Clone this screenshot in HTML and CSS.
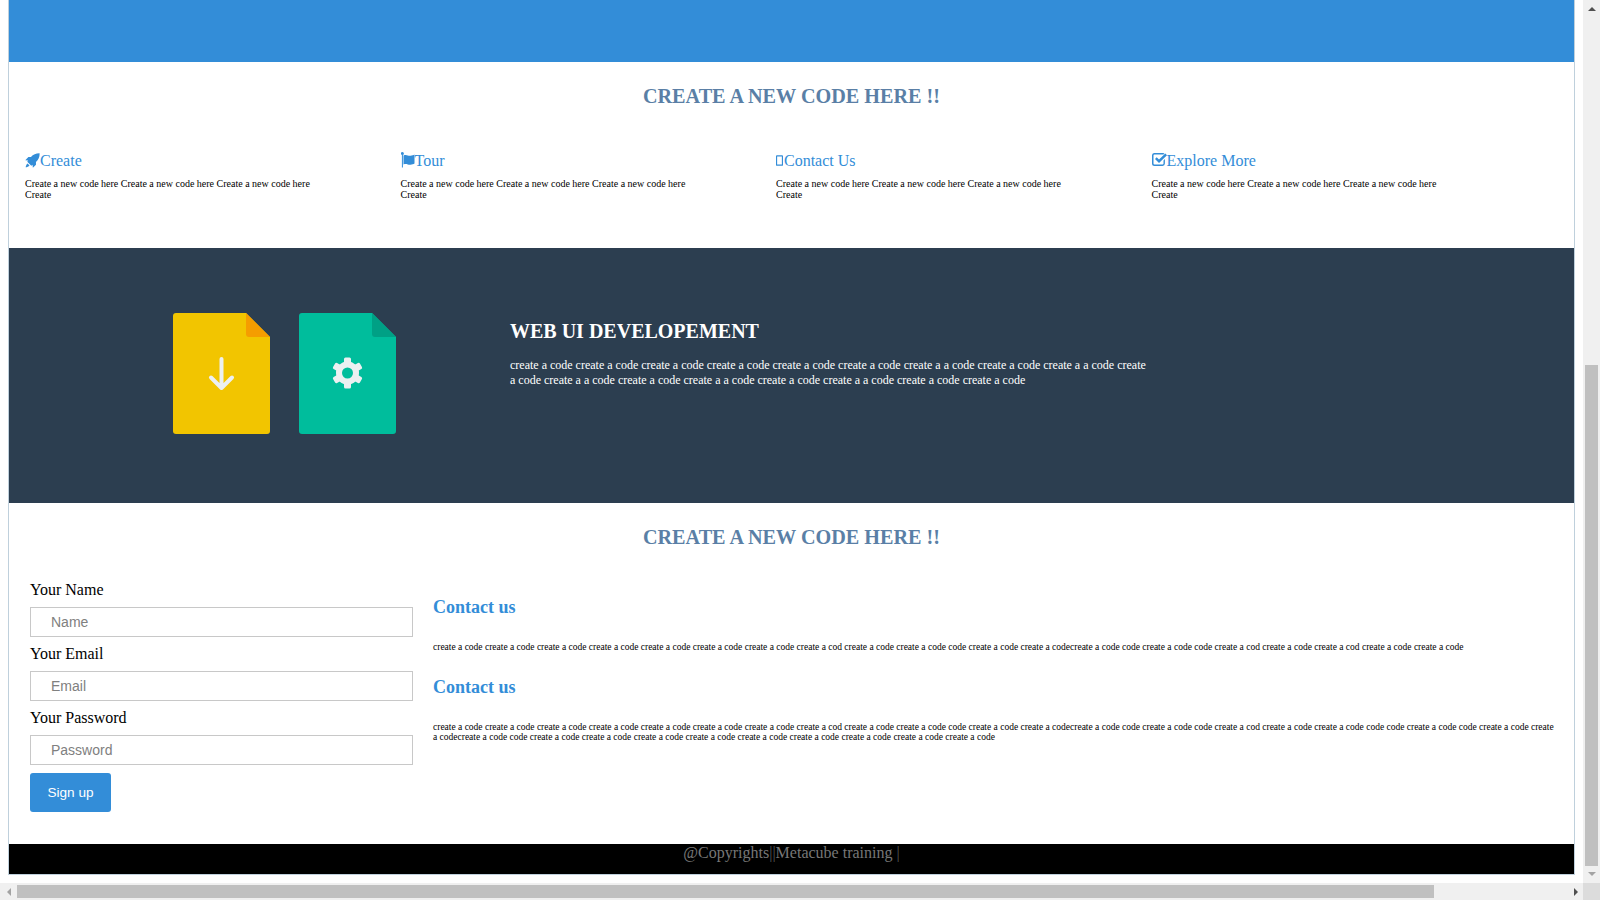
FILE: index.html
```html
<!DOCTYPE html>
<html lang="en">
<head>
<meta charset="utf-8">
<title>Create a new code</title>
<link rel="stylesheet" href="styles.css">
</head>
<body>
<div class="window">
  <div class="viewport">
    <div class="page">
      <div class="topbar"></div>
      <h2 class="section-title">CREATE A NEW CODE HERE !!</h2>
      <div class="features">
        <div class="feature">
          <h3 class="feature-title"><svg class="ficon" viewBox="0 0 16 16"><path d="M15.6.4C12 .3 8.700 1.700 6.400 4.300H3.600L.300 7.600l3.100.4-1 1.300 4.300 4.300 1.300-1 .4 3.100 3.300-3.300V9.600C14.300 7.300 15.700 4 15.600.4zM2.700 11.200C1.400 12 1 14 .7 15.300c1.300-.3 3.300-.7 4.100-2z"/></svg>Create</h3>
          <p class="feature-text">Create a new code here Create a new code here Create a new code here Create</p>
        </div>
        <div class="feature">
          <h3 class="feature-title"><svg class="ficon flag" viewBox="0 0 14 16"><path d="M.9 2.600h1v13h-1zM1.400 0a1.500 1.500 0 1 1 0 3 1.500 1.500 0 0 1 0-3zM2.500 3.500c3-1.400 4.500.6 7 .3 1.500-.2 3-.8 4-1.300v9c-1 .6-2.500 1.100-4 1.300-2.500.3-4-1.600-7-.3z"/></svg>Tour</h3>
          <p class="feature-text">Create a new code here Create a new code here Create a new code here Create</p>
        </div>
        <div class="feature">
          <h3 class="feature-title"><svg class="ficon phone" viewBox="0 0 8 13"><path fill-rule="evenodd" d="M1 .5h6a1 1 0 0 1 1 1v10a1 1 0 0 1-1 1H1a1 1 0 0 1-1-1v-10a1 1 0 0 1 1-1zM1.300 2v9h5.400V2z"/></svg>Contact Us</h3>
          <p class="feature-text">Create a new code here Create a new code here Create a new code here Create</p>
        </div>
        <div class="feature">
          <h3 class="feature-title"><svg class="ficon check" viewBox="0 0 15 14"><path d="M2 1h9a2 2 0 0 1 1.500.6l-1 1H2.500a1 1 0 0 0-1 1v7.900a1 1 0 0 0 1 1H10.500a1 1 0 0 0 1-1V8.500l1.400-1.400v4.400A2.500 2.500 0 0 1 10.500 14H2.500A2.500 2.500 0 0 1 0 11.500v-8A2.500 2.500 0 0 1 2 1z"/><path d="M13.300 1.500 15 3.200 7 11 3 7l1.700-1.700L7 7.600z"/></svg>Explore More</h3>
          <p class="feature-text">Create a new code here Create a new code here Create a new code here Create</p>
        </div>
      </div>
      <div class="banner">
        <div class="files">
          <svg class="file" viewBox="0 0 97 121"><path fill="#f2c500" d="M3 0h70l24 24v94a3 3 0 0 1-3 3H3a3 3 0 0 1-3-3V3a3 3 0 0 1 3-3z"/><path fill="#f59d00" d="M73 0l24 24H76a3 3 0 0 1-3-3z"/><path fill="none" stroke="#ecf0f1" stroke-width="4" stroke-linecap="round" stroke-linejoin="round" d="M48.500 46v29M38 64.500 48.500 75 59 64.500"/></svg>
          <svg class="file" viewBox="0 0 97 121"><path fill="#00bd9c" d="M3 0h70l24 24v94a3 3 0 0 1-3 3H3a3 3 0 0 1-3-3V3a3 3 0 0 1 3-3z"/><path fill="#00a085" d="M73 0l24 24H76a3 3 0 0 1-3-3z"/><g transform="translate(48.500 60)"><circle r="8.500" fill="none" stroke="#ecf0f1" stroke-width="6"/><g fill="#ecf0f1"><rect x="-3.500" y="-15.500" width="7" height="7" rx="1.500"/><rect x="-3.500" y="8.500" width="7" height="7" rx="1.500"/><rect x="-3.500" y="-15.500" width="7" height="7" rx="1.500" transform="rotate(60)"/><rect x="-3.500" y="8.500" width="7" height="7" rx="1.500" transform="rotate(60)"/><rect x="-3.500" y="-15.500" width="7" height="7" rx="1.500" transform="rotate(120)"/><rect x="-3.500" y="8.500" width="7" height="7" rx="1.500" transform="rotate(120)"/></g></g></svg>
        </div>
        <div class="banner-copy">
          <h2 class="banner-title">WEB UI DEVELOPEMENT</h2>
          <p class="banner-text">create a code create a code create a code create a code create a code create a code create a a code create a code create a a code create a code create a a code create a code create a a code create a code create a a code create a code create a code</p>
        </div>
      </div>
      <h2 class="section-title">CREATE A NEW CODE HERE !!</h2>
      <div class="contact">
        <form class="signup">
          <label class="field-label">Your Name</label>
          <input class="field" type="text" placeholder="Name">
          <label class="field-label">Your Email</label>
          <input class="field" type="text" placeholder="Email">
          <label class="field-label">Your Password</label>
          <input class="field" type="text" placeholder="Password">
          <button class="submit" type="button">Sign up</button>
        </form>
        <div class="info">
          <h3 class="info-title">Contact us</h3>
          <p class="info-text">create a code create a code create a code create a code create a code create a code create a code create a cod create a code create a code code create a code create a codecreate a code code create a code code create a cod create a code create a cod create a code create a code</p>
          <h3 class="info-title">Contact us</h3>
          <p class="info-text">create a code create a code create a code create a code create a code create a code create a code create a cod create a code create a code code create a code create a codecreate a code code create a code code create a cod create a code create a code code code create a code code create a code create a codecreate a code code create a code create a code create a code create a code create a code create a code create a code create a code create a code</p>
        </div>
      </div>
      <div class="footer">@Copyrights<span class="sep">||</span>Metacube training <span class="sep">|</span></div>
    </div>
  </div>
  <div class="vscroll">
    <span class="arrow up"></span>
    <div class="vtrack"><div class="vthumb"></div></div>
    <span class="arrow down"></span>
  </div>
  <div class="hscroll">
    <span class="arrow left"></span>
    <div class="htrack"><div class="hthumb"></div></div>
    <span class="arrow right"></span>
  </div>
  <div class="corner"></div>
</div>
</body>
</html>
```

FILE: styles.css
```css
* { box-sizing: border-box; }
html, body { margin: 0; height: 100%; overflow: hidden; }
body { font-family: "Liberation Serif", "Times New Roman", serif; background: #fff; color: #000; }

.window { display: grid; grid-template-columns: 1fr 17px; grid-template-rows: 1fr 17px; width: 1600px; height: 900px; }
.viewport { padding: 0 8px 8px 8px; overflow: hidden; }
.page { border: 1px solid #bfd0dc; border-top: 0; height: 875px; display: flex; flex-direction: column; }

.topbar { height: 62px; background: #338dd8; flex: none; }
.section-title { margin: 0; padding-top: 22px; text-align: center; font-size: 20.200px; font-weight: bold; line-height: 24px; color: #5a7fa6; flex: none; }

.features { display: grid; grid-template-columns: repeat(4, 375.5px); padding: 44px 0 0 16px; height: 140px; flex: none; }
.feature { width: 296px; }
.feature-title { margin: 0; font-size: 16px; font-weight: normal; line-height: 17px; color: #338dd8; display: flex; align-items: center; }
.ficon { width: 15px; height: 15px; fill: #338dd8; flex: none; margin-top: -1px; }
.ficon.flag { width: 14px; height: 16px; }
.ficon.phone { width: 7px; height: 13px; margin-right: 1px; }
.ficon.check { width: 15px; height: 14px; margin-top: -3px; }
.feature-text { margin: 10px 0 0; font-size: 10px; line-height: 10.500px; }

.banner { height: 255px; flex: none; background: #2c3e50; color: #fff; display: flex; align-items: flex-start; }
.files { display: flex; gap: 29px; padding: 65px 0 0 164px; width: 501px; flex: none; }
.file { width: 97px; height: 121px; display: block; }
.banner-copy { width: 640px; padding-top: 73px; }
.banner-title { margin: 0; font-size: 20px; line-height: 21px; font-weight: bold; }
.banner-text { margin: 16px 0 0; font-size: 12px; line-height: 15px; }

.contact { display: flex; padding: 31px 16px 0 21px; flex: 1; }
.signup { width: 383px; flex: none; display: flex; flex-direction: column; align-items: flex-start; }
.field-label { font-size: 16px; line-height: 18px; height: 27px; padding-top: 1px; }
.field { width: 383px; height: 30px; border: 1px solid #c8c8c8; padding: 0 20px; font-family: "Liberation Sans", Arial, sans-serif; font-size: 14px; margin-bottom: 7px; background: #fff; outline: 0; }
.field::placeholder { color: #808080; opacity: 1; }
.submit { width: 81px; height: 39px; margin-top: 1px; border: 0; border-radius: 3px; background: #338dd8; color: #fff; font-family: "Liberation Sans", Arial, sans-serif; font-size: 13.600px; }
.info { margin-left: 20px; padding-top: 17px; flex: 1; }
.info-title { margin: 0; font-size: 18px; font-weight: bold; line-height: 20px; color: #338dd8; }
.info-text { margin: 25px 0 24px; font-size: 9.500px; line-height: 10.500px; }

.footer { height: 30px; flex: none; background: #000; color: #777; text-align: center; font-size: 16px; line-height: 18px; }
.sep { color: #555; }

.vscroll { background: #f0f0f0; display: flex; flex-direction: column; align-items: center; }
.hscroll { background: #f0f0f0; display: flex; align-items: center; grid-column: 1; }
.corner { background: #dcdcdc; }
.vtrack { flex: 1; width: 100%; display: flex; flex-direction: column; justify-content: flex-end; padding: 0 2px; }
.vthumb { height: 501px; background: #c0c0c0; }
.htrack { flex: 1; height: 100%; padding: 2px 0; }
.hthumb { width: 1417px; height: 13px; background: #c0c0c0; }
.arrow { flex: none; width: 0; height: 0; border-style: solid; border-color: transparent; }
.arrow.up { border-width: 0 4px 4px; border-bottom-color: #505050; margin: 7px 0 6px; }
.arrow.down { border-width: 4px 4px 0; border-top-color: #a3a3a3; margin: 6px 0 7px; }
.arrow.left { border-width: 4px 4px 4px 0; border-right-color: #a3a3a3; margin: 0 6px 0 7px; }
.arrow.right { border-width: 4px 0 4px 4px; border-left-color: #505050; margin: 0 5px 0 6px; }
```
